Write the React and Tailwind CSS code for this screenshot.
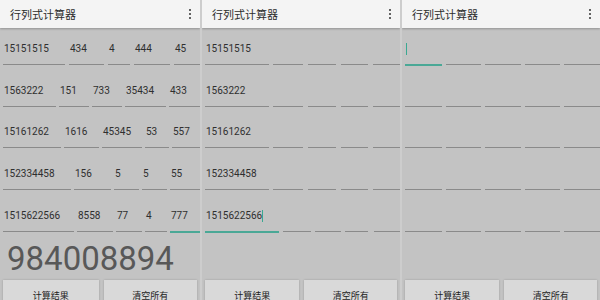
const ROWS_FULL = [
  [[3, 65, '15151515'], [69, 104, '434'], [108, 130, '4'], [134, 170, '444'], [174, 200, '45']],
  [[3, 56, '1563222'], [59, 89, '151'], [92, 122, '733'], [125, 166, '35434'], [169, 200, '433']],
  [[3, 61, '15161262'], [64, 99, '1616'], [102, 142, '45345'], [145, 169, '53'], [172, 200, '557']],
  [[3, 71, '152334458'], [74, 111, '156'], [114, 139, '5'], [142, 167, '5'], [170, 200, '55']],
  [[3, 74, '1515622566'], [77, 113, '8558'], [116, 142, '77'], [145, 167, '4'], [170, 200, '777', 'active']],
];

const emptyRow = (first) => [
  [3, 68, first], [72, 102, ''], [107, 135, ''], [140, 168, ''], [173, 200, ''],
];

const ROWS_PARTIAL = [
  emptyRow('15151515'),
  emptyRow('1563222'),
  emptyRow('15161262'),
  emptyRow('152334458'),
  [[3, 78, '1515622566', 'cursor'], [82, 110, ''], [114, 140, ''], [144, 168, ''], [174, 200, '']],
];

const blank = [[3, 40, ''], [44, 80, ''], [84, 120, ''], [124, 160, ''], [164, 200, '']];
const ROWS_EMPTY = [
  [[3, 40, '', 'cursor'], [44, 80, ''], [84, 120, ''], [124, 160, ''], [164, 200, '']],
  blank, blank, blank, blank,
];

const Field = ({ start, prev, end, text, state }) => {
  const active = state === 'active' || state === 'cursor';
  return (
    <div
      className="relative h-full flex items-center"
      style={{ marginLeft: start - prev, width: end - start }}
    >
      <span className="pl-px text-[10px] leading-none text-[#2f2f2f] flex items-center">
        {text}
        {state === 'cursor' && <span className="inline-block w-px h-[12px] bg-[#3aa892]" />}
      </span>
      <div
        className={
          active
            ? 'absolute left-0 right-0 bottom-[4px] h-[2px] bg-[#4aa896]'
            : 'absolute left-0 right-0 bottom-[5px] h-px bg-[#8a8a8a]'
        }
      />
    </div>
  );
};

const Row = ({ fields }) => {
  let prev = 0;
  return (
    <div className="flex h-[41.8px]">
      {fields.map(([s, e, t, st], i) => {
        const el = <Field key={i} start={s} prev={prev} end={e} text={t} state={st} />;
        prev = e;
        return el;
      })}
    </div>
  );
};

const Panel = ({ rows, result, first }) => (
  <div className={`w-[200px] h-[300px] flex flex-col overflow-hidden bg-[#c3c3c3] ${first ? '' : 'border-l-2 border-[#cdcdcd]'}`}>
    <div className="h-[28px] shrink-0 bg-[#f4f4f4] flex items-center justify-between pl-[10px] pr-[9px] shadow-[0_1px_2px_rgba(0,0,0,0.25)] relative z-10">
      <span className="text-[11px] text-[#2c2c2c]" style={{ fontFamily: '"Noto Sans CJK SC", sans-serif' }}>
        行列式计算器
      </span>
      <div className="flex flex-col gap-[2px]">
        <span className="w-[2px] h-[2px] bg-[#333] rounded-full" />
        <span className="w-[2px] h-[2px] bg-[#333] rounded-full" />
        <span className="w-[2px] h-[2px] bg-[#333] rounded-full" />
      </div>
    </div>
    <div className="flex flex-col">
      {rows.map((r, i) => (
        <Row key={i} fields={r} />
      ))}
    </div>
    <div className="h-[43px] shrink-0 flex items-center pl-[7px]">
      <span className="text-[33px] leading-none text-[#585858]">{result}</span>
    </div>
    <div className="flex gap-[5px] px-[3px]">
      <div className="w-[96px] h-[30px] bg-[#d9d9d9] shadow-[0_0_2px_rgba(0,0,0,0.2)] flex justify-center pt-[9px]">
        <span className="text-[9px] text-[#222]" style={{ fontFamily: '"Noto Sans CJK SC", sans-serif' }}>计算结果</span>
      </div>
      <div className="w-[94px] h-[30px] bg-[#d9d9d9] shadow-[0_0_2px_rgba(0,0,0,0.2)] flex justify-center pt-[9px]">
        <span className="text-[9px] text-[#222]" style={{ fontFamily: '"Noto Sans CJK SC", sans-serif' }}>清空所有</span>
      </div>
    </div>
  </div>
);

export default function App() {
  return (
    <div className="w-[600px] h-[300px] flex overflow-hidden" style={{ fontFamily: 'Roboto, "Noto Sans CJK SC", sans-serif' }}>
      <Panel rows={ROWS_FULL} result="984008894" first />
      <Panel rows={ROWS_PARTIAL} result="" />
      <Panel rows={ROWS_EMPTY} result="" />
    </div>
  );
}
